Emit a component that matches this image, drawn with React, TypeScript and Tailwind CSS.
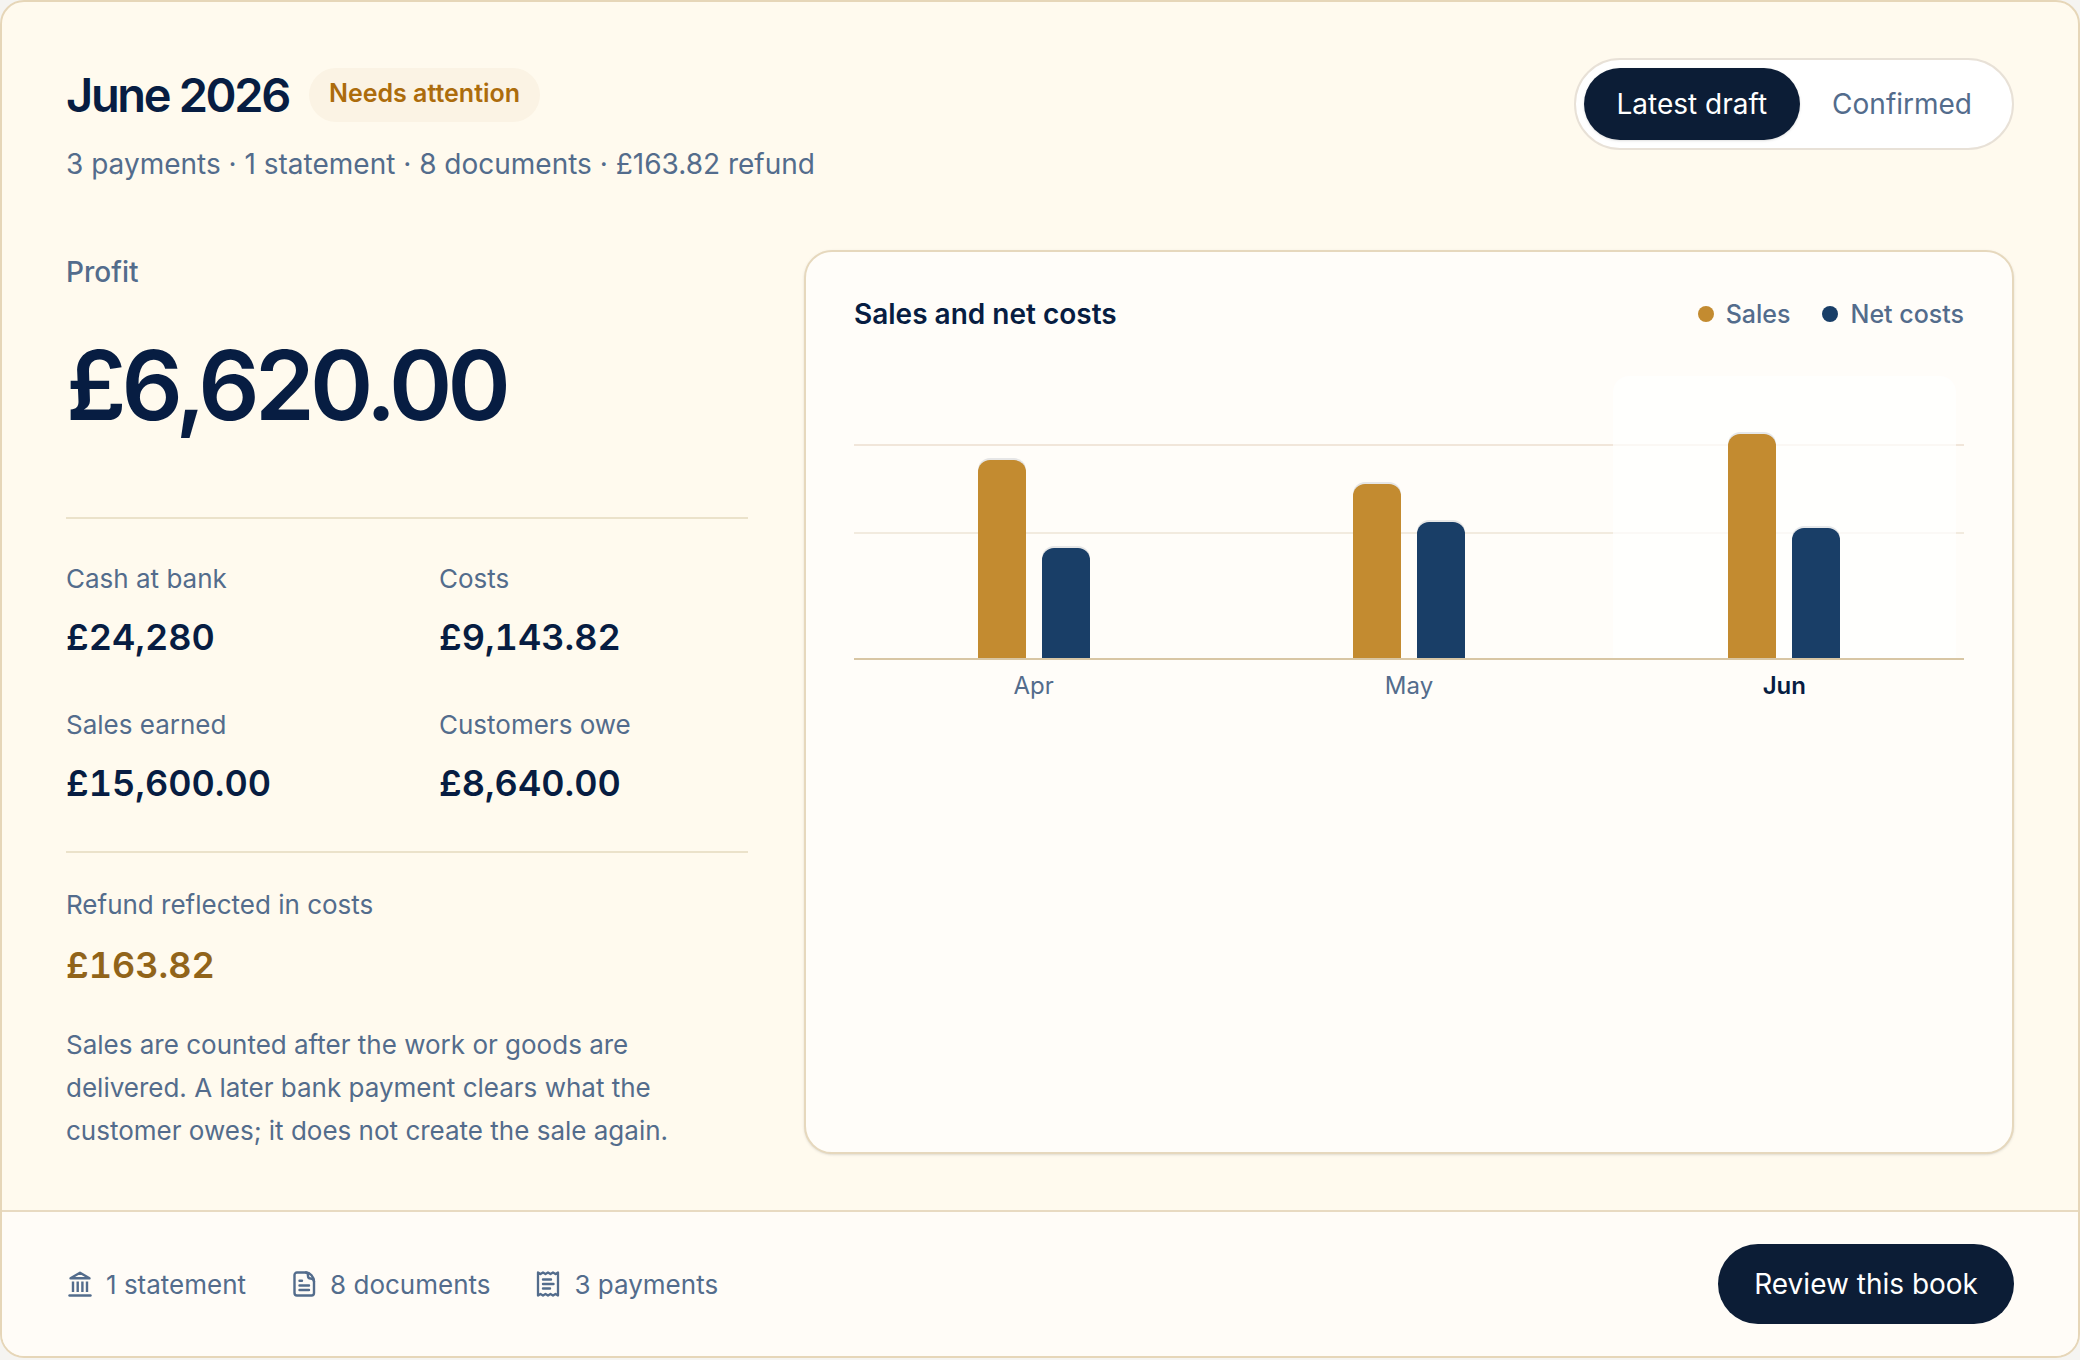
import { useState } from 'react'

type View = 'draft' | 'confirmed'

interface MonthBars {
  month: string
  sales: number
  costs: number
  current?: boolean
}

interface Metric {
  label: string
  value: string
}

// Bar heights in px, measured from the baseline
const MONTHS: MonthBars[] = [
  { month: 'Apr', sales: 198, costs: 110 },
  { month: 'May', sales: 174, costs: 136 },
  { month: 'Jun', sales: 224, costs: 130, current: true },
]

const METRICS: Metric[] = [
  { label: 'Cash at bank', value: '£24,280' },
  { label: 'Costs', value: '£9,143.82' },
  { label: 'Sales earned', value: '£15,600.00' },
  { label: 'Customers owe', value: '£8,640.00' },
]

const VIEWS: { value: View; label: string }[] = [
  { value: 'draft', label: 'Latest draft' },
  { value: 'confirmed', label: 'Confirmed' },
]

function BankIcon() {
  return (
    <svg width="28" height="28" viewBox="0 0 28 28" fill="none" stroke="currentColor" strokeWidth="2.4" strokeLinejoin="round" aria-hidden="true">
      <path d="M4.500 8.300 14 2.800l9.500 5.500Z" />
      <path d="M7 11.500V22M11.700 11.500V22M16.400 11.500V22M21 11.500V22" />
      <path d="M3.500 25.500h21" strokeLinecap="round" />
    </svg>
  )
}

function DocumentIcon() {
  return (
    <svg width="28" height="28" viewBox="0 0 28 28" fill="none" stroke="currentColor" strokeWidth="2.4" strokeLinecap="round" strokeLinejoin="round" aria-hidden="true">
      <path d="M7 2.500h9c4 0 8 4.500 8 9v11.500a2.500 2.500 0 0 1-2.500 2.500H7A2.500 2.500 0 0 1 4.500 23V5A2.500 2.500 0 0 1 7 2.500Z" />
      <path d="M16 2.500c1.500 0 2 1.500 2 3.500 0 1.500 1 2.500 2.500 2.500 2 0 3.500 1 3.500 3M9.500 10.800h2.500M9.500 15.500h9.500M9.500 20h9.500" />
    </svg>
  )
}

function ReceiptIcon() {
  return (
    <svg width="28" height="28" viewBox="0 0 28 28" fill="none" stroke="currentColor" strokeLinecap="round" strokeLinejoin="round" aria-hidden="true">
      <path
        d="M4 2.500 6.500 4 9 2.500 11.500 4 14 2.500 16.500 4 19 2.500 21.500 4 24 2.500v23L21.500 24 19 25.500 16.500 24 14 25.500 11.500 24 9 25.500 6.500 24 4 25.500Z"
        strokeWidth="2.3"
      />
      <path d="M9 9.500h8M9 14h10.500M9 18.500h7" strokeWidth="2.4" />
    </svg>
  )
}

function Header({ view, onViewChange }: { view: View; onViewChange: (view: View) => void }) {
  return (
    <header className="flex items-start justify-between">
      <div className="pt-2">
        <div className="flex items-center gap-5">
          <h1 className="text-[47px] leading-[58px] font-semibold tracking-tighter">June 2026</h1>
          <span className="rounded-full bg-[#fbf3e4] px-5 pt-2 pb-3 text-[25px] leading-[34px] font-semibold text-[#ac6c0c]">
            Needs attention
          </span>
        </div>
        <p className="mt-[18px] text-[28px] leading-[44px] text-[#536c8c]">
          3 payments · 1 statement · 8 documents · £163.82 refund
        </p>
      </div>

      <div className="flex rounded-full border-2 border-[#e8e1d7] bg-white p-2">
        {VIEWS.map((item) => (
          <button
            key={item.value}
            type="button"
            aria-pressed={view === item.value}
            onClick={() => onViewChange(item.value)}
            className={
              view === item.value
                ? 'h-[72px] rounded-full bg-[#0c1d36] px-[33px] text-[28px] text-white shadow-sm'
                : 'h-[72px] rounded-full px-8 text-[28px] text-[#536c8c]'
            }
          >
            {item.label}
          </button>
        ))}
      </div>
    </header>
  )
}

function Summary() {
  return (
    <section>
      <h2 className="text-[28px] leading-[44px] font-medium text-[#536c8c]">Profit</h2>
      <p className="mt-10 text-8xl leading-[103px] font-semibold tracking-tighter">£6,620.00</p>

      <dl className="mt-20 grid grid-cols-2 gap-x-16 gap-y-10 border-y-2 border-[#ebe2ca] py-10">
        {METRICS.map((metric) => (
          <div key={metric.label}>
            <dt className="text-[26px] leading-[40px] text-[#536c8c]">{metric.label}</dt>
            <dd className="mt-2.5 text-4xl leading-[56px] font-semibold tabular-nums">{metric.value}</dd>
          </div>
        ))}
      </dl>

      <p className="mt-8 text-[26px] leading-[40px] text-[#536c8c]">Refund reflected in costs</p>
      <p className="mt-3 text-4xl leading-[56px] font-semibold text-[#91641a] tabular-nums">£163.82</p>
      <p className="mt-[30px] pb-0.5 text-[26px] leading-[43px] text-[#536c8c]">
        Sales are counted after the work or goods are delivered. A later bank payment clears what the customer owes; it
        does not create the sale again.
      </p>
    </section>
  )
}

function Chart() {
  return (
    <section className="rounded-[28px] border-2 border-[#e6d8bd] bg-[#fffdf9] px-12 py-10 shadow-sm">
      <div className="flex items-center justify-between">
        <h2 className="text-[28px] leading-[44px] font-semibold">Sales and net costs</h2>
        <ul className="flex gap-8 text-[25px] leading-[34px] font-medium text-[#536c8c]">
          <li className="flex items-center gap-3">
            <span className="size-4 rounded-full bg-[#c38b30]" />
            Sales
          </li>
          <li className="flex items-center gap-3">
            <span className="size-4 rounded-full bg-[#193e67]" />
            Net costs
          </li>
        </ul>
      </div>

      <div className="relative mt-10 h-[284px] border-b-2 border-[#d8c6a4]">
        {/* grid lines */}
        <div className="absolute inset-x-0 bottom-[212px] h-0.5 bg-[#f1e6da]" />
        <div className="absolute inset-x-0 bottom-[124px] h-0.5 bg-[#f2ebdf]" />
        <div className="relative grid h-full grid-cols-3 gap-8 px-2">
          {MONTHS.map((item) => (
            <div
              key={item.month}
              className={
                item.current
                  ? 'flex items-end justify-center gap-4 rounded-t-2xl bg-white/70'
                  : 'flex items-end justify-center gap-4'
              }
            >
              <div
                className="w-12 rounded-t-xl bg-[#c38b30] shadow-[0_-2px_0_rgba(7,29,66,0.1)]"
                style={{ height: item.sales }}
              />
              <div
                className="w-12 rounded-t-xl bg-[#193e67] shadow-[0_-2px_0_rgba(7,29,66,0.1)]"
                style={{ height: item.costs }}
              />
            </div>
          ))}
        </div>
      </div>
      <div className="mt-2 grid grid-cols-3 gap-8 px-2 text-center text-2xl leading-[36px]">
        {MONTHS.map((item) => (
          <span key={item.month} className={item.current ? 'font-semibold' : 'text-[#536c8c]'}>
            {item.month}
          </span>
        ))}
      </div>
    </section>
  )
}

function Footer() {
  return (
    <footer className="flex items-center justify-between border-t-2 border-[#e8dac1] bg-[#fffcf7] px-16 py-8">
      <ul className="flex gap-11 text-[26px] text-[#536c8c]">
        <li className="flex items-center gap-3">
          <BankIcon />
          1 statement
        </li>
        <li className="flex items-center gap-3">
          <DocumentIcon />
          8 documents
        </li>
        <li className="flex items-center gap-3">
          <ReceiptIcon />
          3 payments
        </li>
      </ul>
      <button type="button" className="h-20 rounded-full bg-[#0c1d36] px-9 text-[28px] text-white">
        Review this book
      </button>
    </footer>
  )
}

export default function App() {
  const [view, setView] = useState<View>('draft')

  return (
    <div className="min-h-screen bg-[#f5f4f1] pb-0.5 font-['Inter',sans-serif] text-[#071d42]">
      <main className="overflow-hidden rounded-3xl border-2 border-[#e6d6b8] bg-[#fffaee]">
        <div className="px-16 pt-14 pb-14">
          <Header view={view} onViewChange={setView} />
          <div className="mt-16 grid grid-cols-[31fr_55fr] gap-14">
            <Summary />
            <Chart />
          </div>
        </div>
        <Footer />
      </main>
    </div>
  )
}
